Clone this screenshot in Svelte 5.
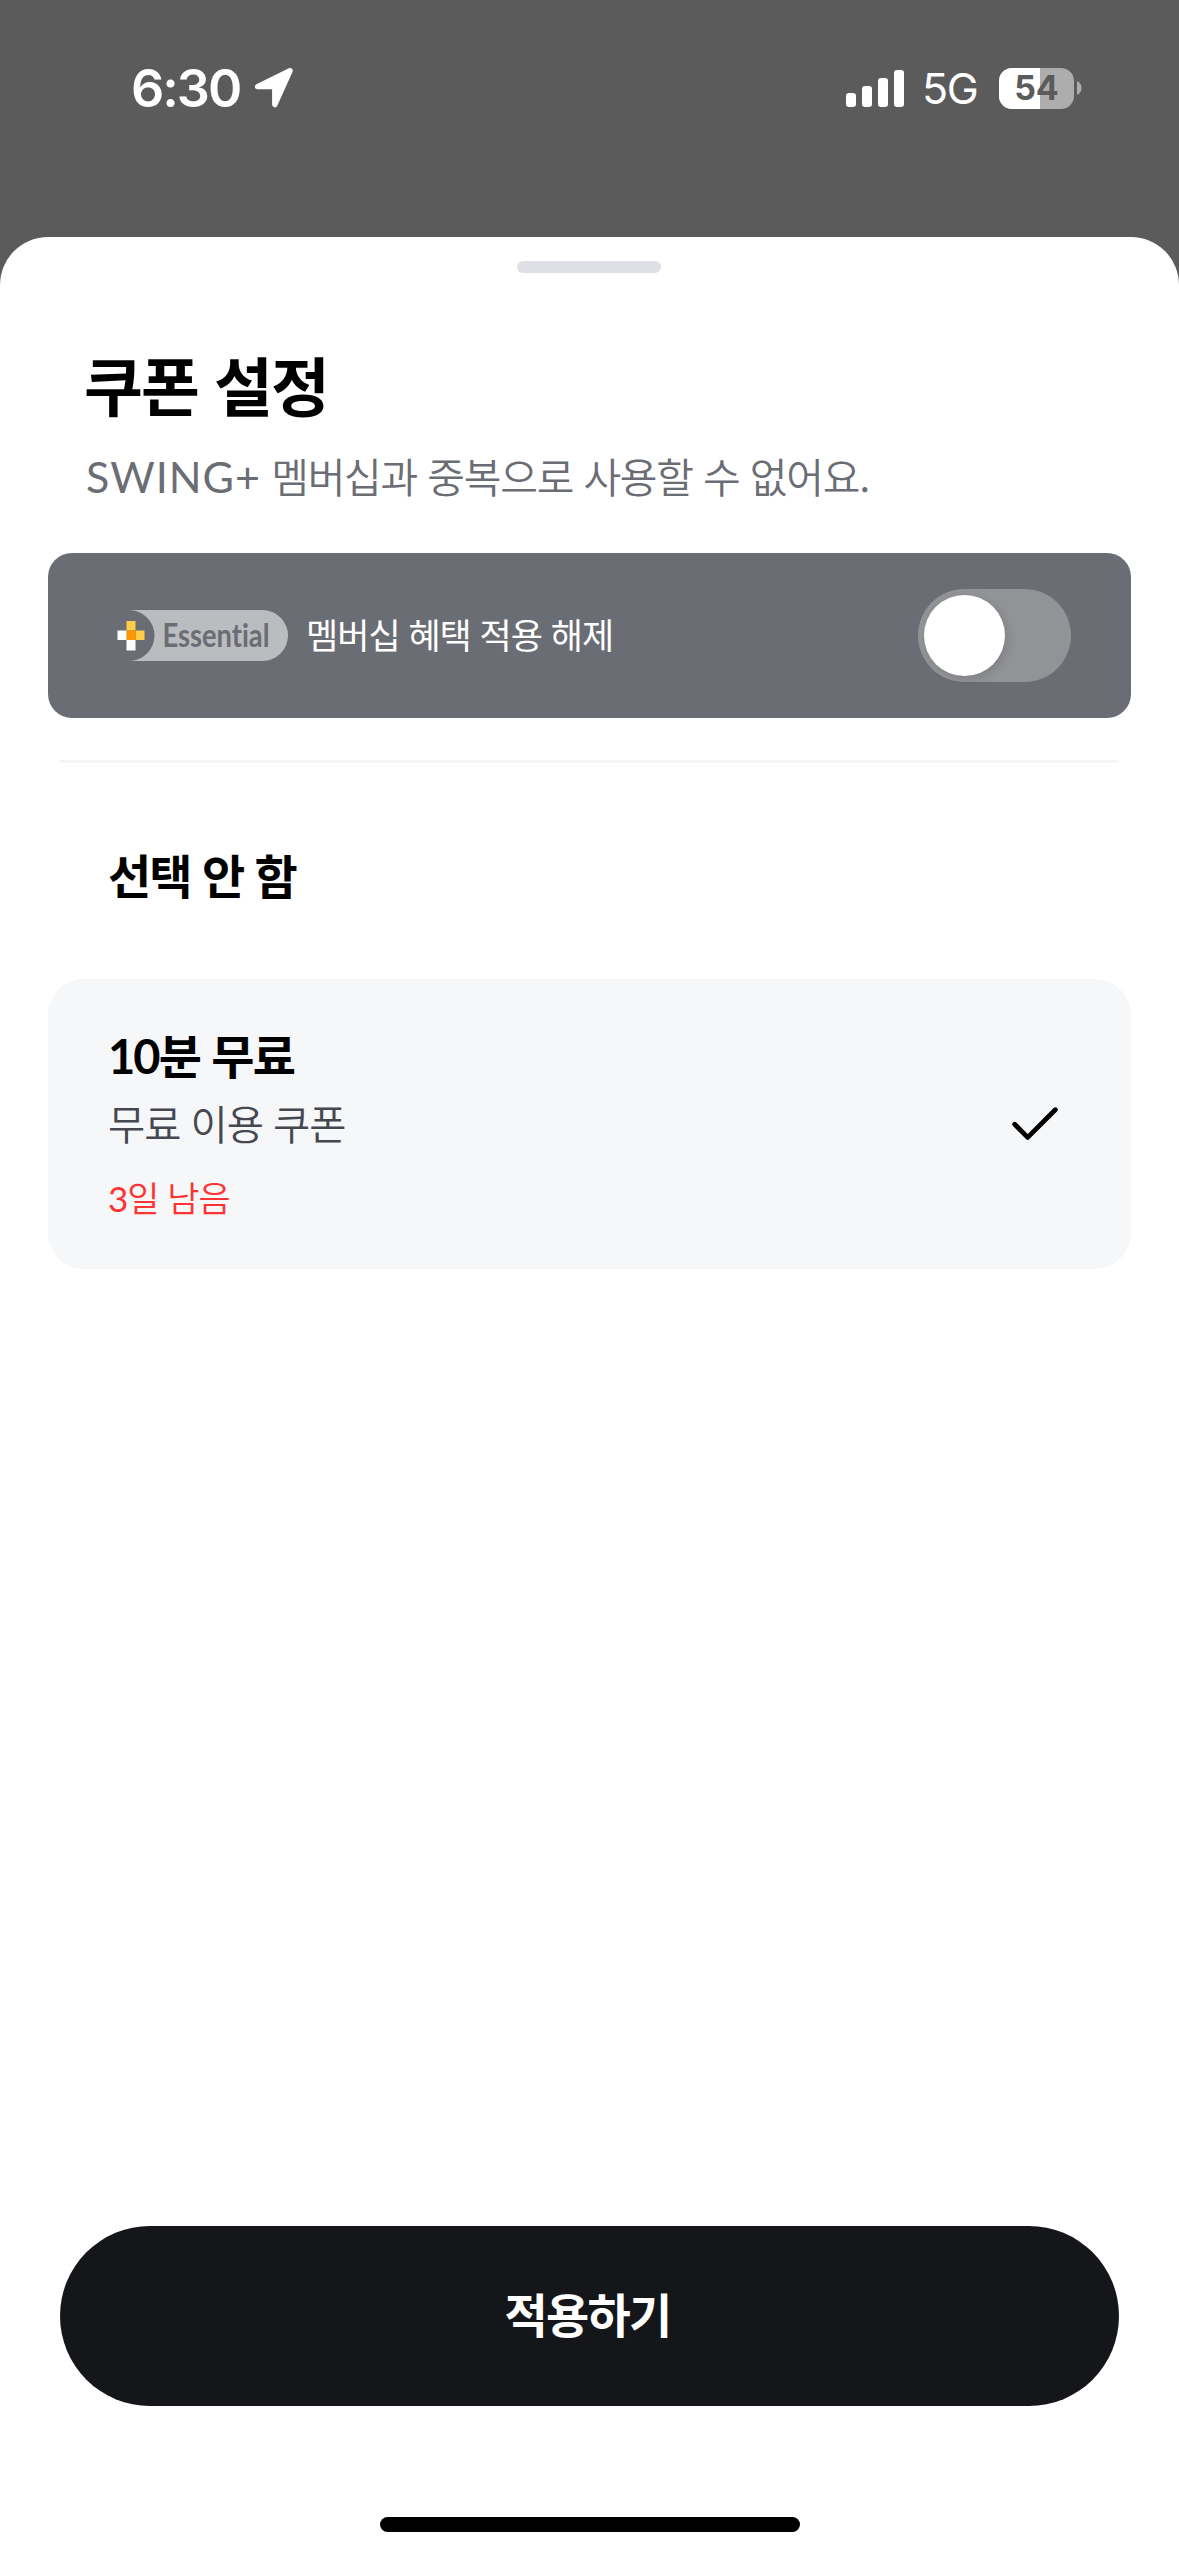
<script lang="ts">
    let membershipOff = $state(false);
    let selected = $state(1);

    const signalBars = [14, 21, 29, 37];
    const battery = 54;
</script>

<div class="screen" lang="ko">
    <header class="status">
        <div class="left">
            <span class="time">6:30</span>
            <svg class="arrow" width="40" height="40" viewBox="0 0 40 40">
                <path d="M3.6 18.6 36 2.8 20.8 36.6V18.6Z" fill="#fff" stroke="#fff" stroke-width="5.4" stroke-linejoin="round" />
            </svg>
        </div>
        <div class="right">
            <div class="signal">
                {#each signalBars as height}
                    <i style="height: {height}px"></i>
                {/each}
            </div>
            <span class="network">5G</span>
            <div class="battery">
                <div class="cell">
                    <div class="level" style="width: {battery}%"></div>
                    <span>{battery}</span>
                </div>
                <svg width="5" height="14" viewBox="0 0 5 14">
                    <path d="M0 0C6 2.5 6 11.5 0 14Z" fill="#adadad" />
                </svg>
            </div>
        </div>
    </header>

    <main class="sheet">
        <div class="handle"></div>

        <h1>쿠폰 설정</h1>
        <p class="notice"><span class="latin">SWING+</span> 멤버십과 중복으로 사용할 수 없어요.</p>

        <section class="membership">
            <svg class="badge" width="171" height="51" viewBox="0 0 171 51">
                <path d="M12 0H145.5A25.5 25.5 0 0 1 145.5 51H12A25.5 25.5 0 0 0 12 0Z" fill="#bbbcbf" />
                <path d="M9.5 11h9v9.5h-9z" fill="#ffcd4a" />
                <path d="M18.5 20.5h9v9.5h-9z" fill="#ffcd4a" />
                <path d="M9.5 20.5h9v9.5h-9z" fill="#ff9500" />
                <path d="M.5 20.5h9v9.5h-9zM9.5 30h9v10.5h-9z" fill="#fff" />
                <text x="45.5" y="37" textLength="107" lengthAdjust="spacingAndGlyphs">Essential</text>
            </svg>
            <span class="label">멤버십 혜택 적용 해제</span>
            <button
                class="toggle"
                class:on={membershipOff}
                aria-label="멤버십 혜택 적용 해제"
                onclick={() => (membershipOff = !membershipOff)}
            >
                <i></i>
            </button>
        </section>

        <hr />

        <button class="option none" class:selected={selected === 0} onclick={() => (selected = 0)}>
            <strong>선택 안 함</strong>
        </button>

        <button class="option coupon" class:selected={selected === 1} onclick={() => (selected = 1)}>
            <div class="info">
                <strong><span class="latin">10</span>분 무료</strong>
                <span class="desc">무료 이용 쿠폰</span>
                <span class="remain"><span class="latin">3</span>일 남음</span>
            </div>
            {#if selected === 1}
                <svg width="48" height="34" viewBox="0 0 48 34">
                    <path d="M3.7 17.3 16.7 30.4 44.3 2.8" fill="none" stroke="#000" stroke-width="4.8" stroke-linecap="round" stroke-linejoin="round" />
                </svg>
            {/if}
        </button>

        <button class="apply">적용하기</button>
        <div class="home"></div>
    </main>
</div>

<style>
:global(body) {
    margin: 0;
}

.screen {
    width: 1179px;
    height: 2556px;
    display: flex;
    flex-direction: column;
    background-color: #5b5b5b;
    color: #000;
    font-family: "Noto Sans CJK KR", sans-serif;
}

button {
    border: none;
    padding: 0;
    font-family: inherit;
    color: inherit;
    text-align: left;
}

.status {
    height: 237px;
    box-sizing: border-box;
    padding: 58px 97px 0 131px;
    display: flex;
    justify-content: space-between;
    align-items: flex-start;
    color: #fff;
    font-family: Inter, sans-serif;
}

.left, .right {
    height: 60px;
    display: flex;
    align-items: center;
}

.time {
    width: 123px;
    font-size: 52px;
    font-weight: 600;
    line-height: 61px;
    letter-spacing: -2px;
}

.signal {
    height: 37px;
    display: flex;
    align-items: flex-end;
    gap: 6px;
}

.signal i {
    width: 10px;
    border-radius: 3px;
    background-color: #fff;
}

.network {
    width: 77px;
    margin-left: 18px;
    font-size: 43px;
    line-height: 62px;
    letter-spacing: -1.5px;
}

.battery {
    display: flex;
    align-items: center;
    gap: 3px;
}

.cell {
    position: relative;
    width: 75px;
    height: 41px;
    border-radius: 13px;
    overflow: hidden;
    background-color: #adadad;
    color: #5b5b5b;
    text-align: center;
}

.cell .level {
    position: absolute;
    inset: 0 auto 0 0;
    background-color: #fff;
}

.cell span {
    position: relative;
    font-size: 34px;
    font-weight: 700;
    line-height: 40px;
}

.sheet {
    flex: 1;
    display: flex;
    flex-direction: column;
    border-radius: 48px 48px 0 0;
    background-color: #fff;
}

.handle {
    width: 144px;
    height: 12px;
    margin: 24px 518px 0 517px;
    border-radius: 6px;
    background-color: #dfe0e6;
}

h1 {
    margin: 68px 0 0 84px;
    font-size: 64px;
    font-weight: 700;
    line-height: 84px;
    letter-spacing: -1.9px;
}

.notice {
    margin: 22px 0 0 86px;
    font-size: 41px;
    font-weight: 350;
    line-height: 56px;
    letter-spacing: -1.25px;
    color: #6b6d75;
}

.latin {
    font-family: Lato, sans-serif;
    line-height: 0;
}

.notice .latin {
    font-size: 43px;
    font-weight: 400;
    letter-spacing: 1px;
}

.membership {
    height: 165px;
    box-sizing: border-box;
    margin: 50px 48px 0;
    padding: 0 60px 0 69px;
    display: flex;
    align-items: center;
    border-radius: 24px;
    background-color: #6b6d75;
    color: #fff;
}

.badge {
    overflow: visible;
}

.badge text {
    font-family: Lato, sans-serif;
    font-size: 31.5px;
    font-weight: 700;
    font-variant-ligatures: none;
    fill: #6b6d75;
}

.label {
    margin-left: 18px;
    padding-bottom: 4px;
    font-size: 35px;
    line-height: 48px;
    letter-spacing: -1px;
}

.toggle {
    width: 153px;
    height: 93px;
    margin-left: auto;
    padding: 6px;
    display: flex;
    border-radius: 47px;
    background-color: #929397;
}

.toggle.on {
    justify-content: flex-end;
    background-color: #15161a;
}

.toggle i {
    width: 81px;
    height: 81px;
    border-radius: 50%;
    background-color: #fff;
    box-shadow: 3px 3px 10px rgba(0, 0, 0, 0.12);
}

hr {
    width: 1059px;
    height: 3px;
    margin: 42px auto 0;
    border: none;
    background-color: #f5f6f9;
}

.option {
    box-sizing: border-box;
    margin: 0 48px;
    padding: 0 72px 0 60px;
    display: flex;
    align-items: center;
    justify-content: space-between;
    border-radius: 36px;
    background-color: #fff;
}

.option.selected {
    background-color: #f6f7f9;
}

.none {
    height: 216px;
    padding-top: 5px;
}

.coupon {
    height: 290px;
}

.info {
    display: flex;
    flex-direction: column;
    padding-bottom: 7px;
}

strong {
    font-size: 47px;
    font-weight: 700;
    line-height: 70px;
    letter-spacing: -1.9px;
}

.desc {
    margin-top: 4px;
    font-size: 40.5px;
    font-weight: 350;
    line-height: 60px;
    letter-spacing: -1.1px;
    color: #46474f;
}

.remain {
    margin-top: 18px;
    font-size: 35px;
    font-weight: 350;
    line-height: 52px;
    letter-spacing: -1px;
    color: #ff3333;
}

.remain .latin {
    font-weight: 400;
}

.apply {
    height: 180px;
    margin: auto 60px 0;
    padding: 0 4px 7px 0;
    border-radius: 90px;
    background-color: #15161a;
    color: #fff;
    font-size: 47px;
    font-weight: 700;
    letter-spacing: -1.7px;
    text-align: center;
}

.home {
    width: 420px;
    height: 15px;
    margin: 111px auto 24px;
    border-radius: 8px;
    background-color: #000;
}
</style>
